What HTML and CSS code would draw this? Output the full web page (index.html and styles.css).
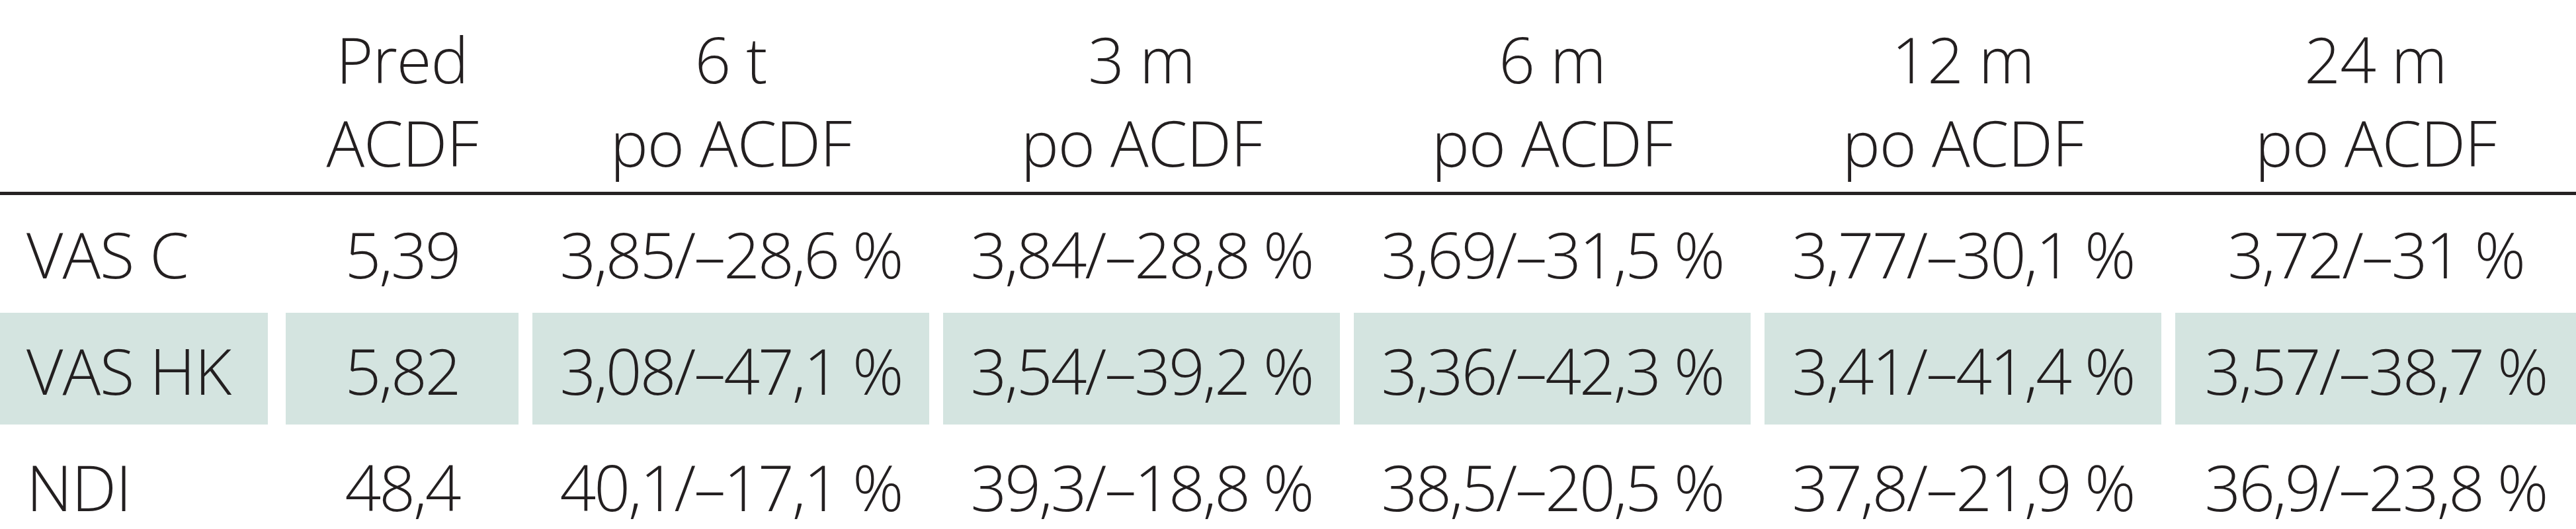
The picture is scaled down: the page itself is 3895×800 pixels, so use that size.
FILE: index.html
```html
<!DOCTYPE html>
<html lang="cs">
<head>
<meta charset="utf-8">
<title>Tabulka VAS / NDI</title>
<link rel="stylesheet" href="styles.css">
</head>
<body>
<div class="tbl">
  <div class="row head">
    <div class="cell lab"></div>
    <div class="cell">Pred<br>ACDF</div>
    <div class="cell">6 t<br>po ACDF</div>
    <div class="cell">3 m<br>po ACDF</div>
    <div class="cell">6 m<br>po ACDF</div>
    <div class="cell">12 m<br>po ACDF</div>
    <div class="cell">24 m<br>po ACDF</div>
  </div>
  <div class="body">
    <div class="row">
      <div class="cell lab">VAS C</div>
      <div class="cell">5,39</div>
      <div class="cell">3,85/–28,6 %</div>
      <div class="cell">3,84/–28,8 %</div>
      <div class="cell">3,69/–31,5 %</div>
      <div class="cell">3,77/–30,1 %</div>
      <div class="cell">3,72/–31 %</div>
    </div>
    <div class="row shaded">
      <div class="cell lab">VAS HK</div>
      <div class="cell">5,82</div>
      <div class="cell">3,08/–47,1 %</div>
      <div class="cell">3,54/–39,2 %</div>
      <div class="cell">3,36/–42,3 %</div>
      <div class="cell">3,41/–41,4 %</div>
      <div class="cell">3,57/–38,7 %</div>
    </div>
    <div class="row">
      <div class="cell lab">NDI</div>
      <div class="cell">48,4</div>
      <div class="cell">40,1/–17,1 %</div>
      <div class="cell">39,3/–18,8 %</div>
      <div class="cell">38,5/–20,5 %</div>
      <div class="cell">37,8/–21,9 %</div>
      <div class="cell">36,9/–23,8 %</div>
    </div>
  </div>
</div>
</body>
</html>
```

FILE: styles.css
```css
html, body {
  margin: 0;
  padding: 0;
  background: #ffffff;
}

body {
  width: 3895px;
  overflow: hidden;
}

.tbl {
  font-family: "Open Sans", "Liberation Sans", sans-serif;
  font-stretch: 100%;
  font-weight: 300;
  font-size: 96px;
  letter-spacing: -3px;
  color: #231f20;
}

.row {
  display: grid;
  grid-template-columns: 411px 352px repeat(4, 600px) 1fr;
  column-gap: 21px;
}

.cell {
  text-align: center;
  white-space: nowrap;
}

.cell.lab {
  margin-right: 6px;
  text-align: left;
  padding-left: 40px;
  letter-spacing: -1px;
}

.head {
  padding-top: 26px;
  padding-bottom: 12px;
  border-bottom: 5px solid #262223;
  line-height: 126px;
  letter-spacing: -1px;
}

.body {
  display: flex;
  flex-direction: column;
  gap: 7px;
  margin-top: 2px;
}

.body .cell {
  height: 169px;
  box-sizing: border-box;
  padding-top: 5px;
  line-height: 164px;
}

.shaded .cell {
  background: #d4e4e0;
}
```
